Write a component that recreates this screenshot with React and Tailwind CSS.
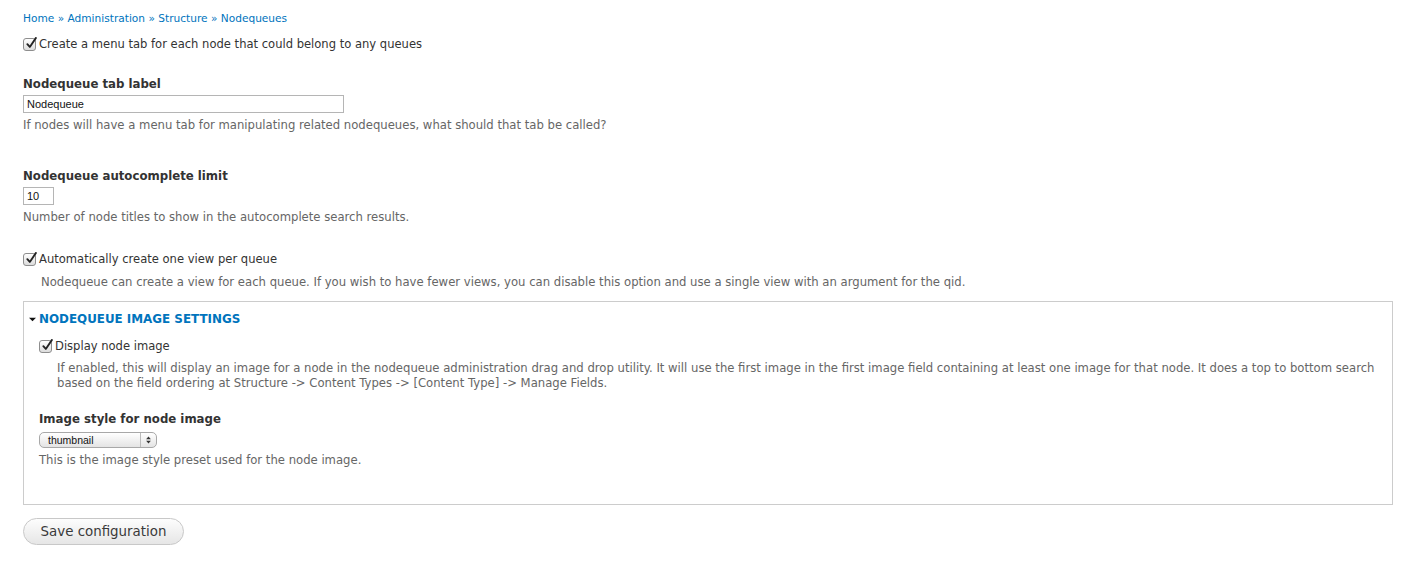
import React from 'react';

const font = "font-['DejaVu_Sans',sans-serif]";

// mac-style checked checkbox
const Check = () => (
  <span className="relative inline-block w-[13px] h-[13px] shrink-0 rounded-[3px] border border-[#8e8e8e] bg-gradient-to-b from-white to-[#dcdcdc]">
    <svg viewBox="0 0 14 14" className="absolute -top-[3px] left-[1px] w-[13px] h-[14px]">
      <path d="M2.5 8.2 L5.2 11.2 L11.8 1.5" fill="none" stroke="#222" strokeWidth="2" strokeLinecap="round" strokeLinejoin="round" />
    </svg>
  </span>
);

const CheckRow = ({ children }) => (
  <label className="flex items-center gap-[3px] text-[11.55px] text-[#333] leading-[16px]">
    <Check />
    <span>{children}</span>
  </label>
);

const Desc = ({ children, className = '' }) => (
  <div className={`text-[11.65px] leading-[15px] text-[#666] ${className}`}>{children}</div>
);

const Label = ({ children, className = 'mb-[3px]' }) => (
  <div className={`text-[11.75px] font-bold text-[#333] leading-[16px] ${className}`}>{children}</div>
);

const App = () => {
  return (
    <div className={`min-h-[562px] bg-white ${font} px-[23px] pt-[10px]`}>
      {/* Breadcrumb */}
      <div className="text-[10.6px] leading-[16px] text-[#0074bd]">
        <a>Home</a> » <a>Administration</a> » <a>Structure</a> » <a>Nodequeues</a>
      </div>

      <div className="mt-[10px]">
        <CheckRow>Create a menu tab for each node that could belong to any queues</CheckRow>
      </div>

      <div className="mt-[24px]">
        <Label>Nodequeue tab label</Label>
        <input
          readOnly
          value="Nodequeue"
          className="block w-[321px] h-[18px] border border-[#b5b5b5] px-[3px] text-[11px] font-['Liberation_Sans',sans-serif] text-[#111] outline-none"
        />
        <Desc className="mt-[5px]">If nodes will have a menu tab for manipulating related nodequeues, what should that tab be called?</Desc>
      </div>

      <div className="mt-[35px]">
        <Label>Nodequeue autocomplete limit</Label>
        <input
          readOnly
          value="10"
          className="block w-[31px] h-[18px] border border-[#b5b5b5] px-[3px] text-[11px] font-['Liberation_Sans',sans-serif] text-[#111] outline-none"
        />
        <Desc className="mt-[5px]">Number of node titles to show in the autocomplete search results.</Desc>
      </div>

      <div className="mt-[26px]">
        <CheckRow>Automatically create one view per queue</CheckRow>
        <Desc className="mt-[8px] pl-[18px]">Nodequeue can create a view for each queue. If you wish to have fewer views, you can disable this option and use a single view with an argument for the qid.</Desc>
      </div>

      {/* Fieldset */}
      <div className="mt-[11px] border border-[#ccc] w-[1370px] h-[204px] px-[15px] pt-[9px]">
        <div className="flex items-center gap-[3px] text-[#0074bd] font-bold text-[11.9px] leading-[16px] -ml-[10px]">
          <svg viewBox="0 0 8 8" className="w-[7px] h-[7px]">
            <path d="M0 2 L8 2 L4 6 Z" fill="#111" />
          </svg>
          <span>NODEQUEUE IMAGE SETTINGS</span>
        </div>

        <div className="mt-[11px]">
          <CheckRow>Display node image</CheckRow>
          <Desc className="mt-[7px] pl-[18px]">
            If enabled, this will display an image for a node in the nodequeue administration drag and drop utility. It will use the first image in the first image field containing at least one image for that node. It does a top to bottom search based on the field ordering at Structure -&gt; Content Types -&gt; [Content Type] -&gt; Manage Fields.
          </Desc>
        </div>

        <div className="mt-[20px]">
          <Label className="mb-[5px]">Image style for node image</Label>
          <div className="flex items-center w-[118px] h-[16px] rounded-[5px] border border-[#a8a8a8] bg-gradient-to-b from-white to-[#e4e4e4] font-['Liberation_Sans',sans-serif] text-[10.5px] text-[#111]">
            <span className="flex-1 pl-[8px] leading-[14px]">thumbnail</span>
            <span className="w-[16px] h-full border-l border-[#bbb] flex items-center justify-center">
              <svg viewBox="0 0 6 10" className="w-[5px] h-[8px]">
                <path d="M0 4 L3 0.5 L6 4 Z M0 6 L3 9.5 L6 6 Z" fill="#333" />
              </svg>
            </span>
          </div>
          <Desc className="mt-[5px]">This is the image style preset used for the node image.</Desc>
        </div>
      </div>

      <button className="mt-[13px] h-[27px] w-[161px] rounded-full border border-[#c8c8c8] bg-gradient-to-b from-[#fdfdfd] to-[#e6e6e6] text-[13.4px] text-[#3a3a3a] leading-[16px]">
        Save configuration
      </button>
    </div>
  );
};

export default App;
